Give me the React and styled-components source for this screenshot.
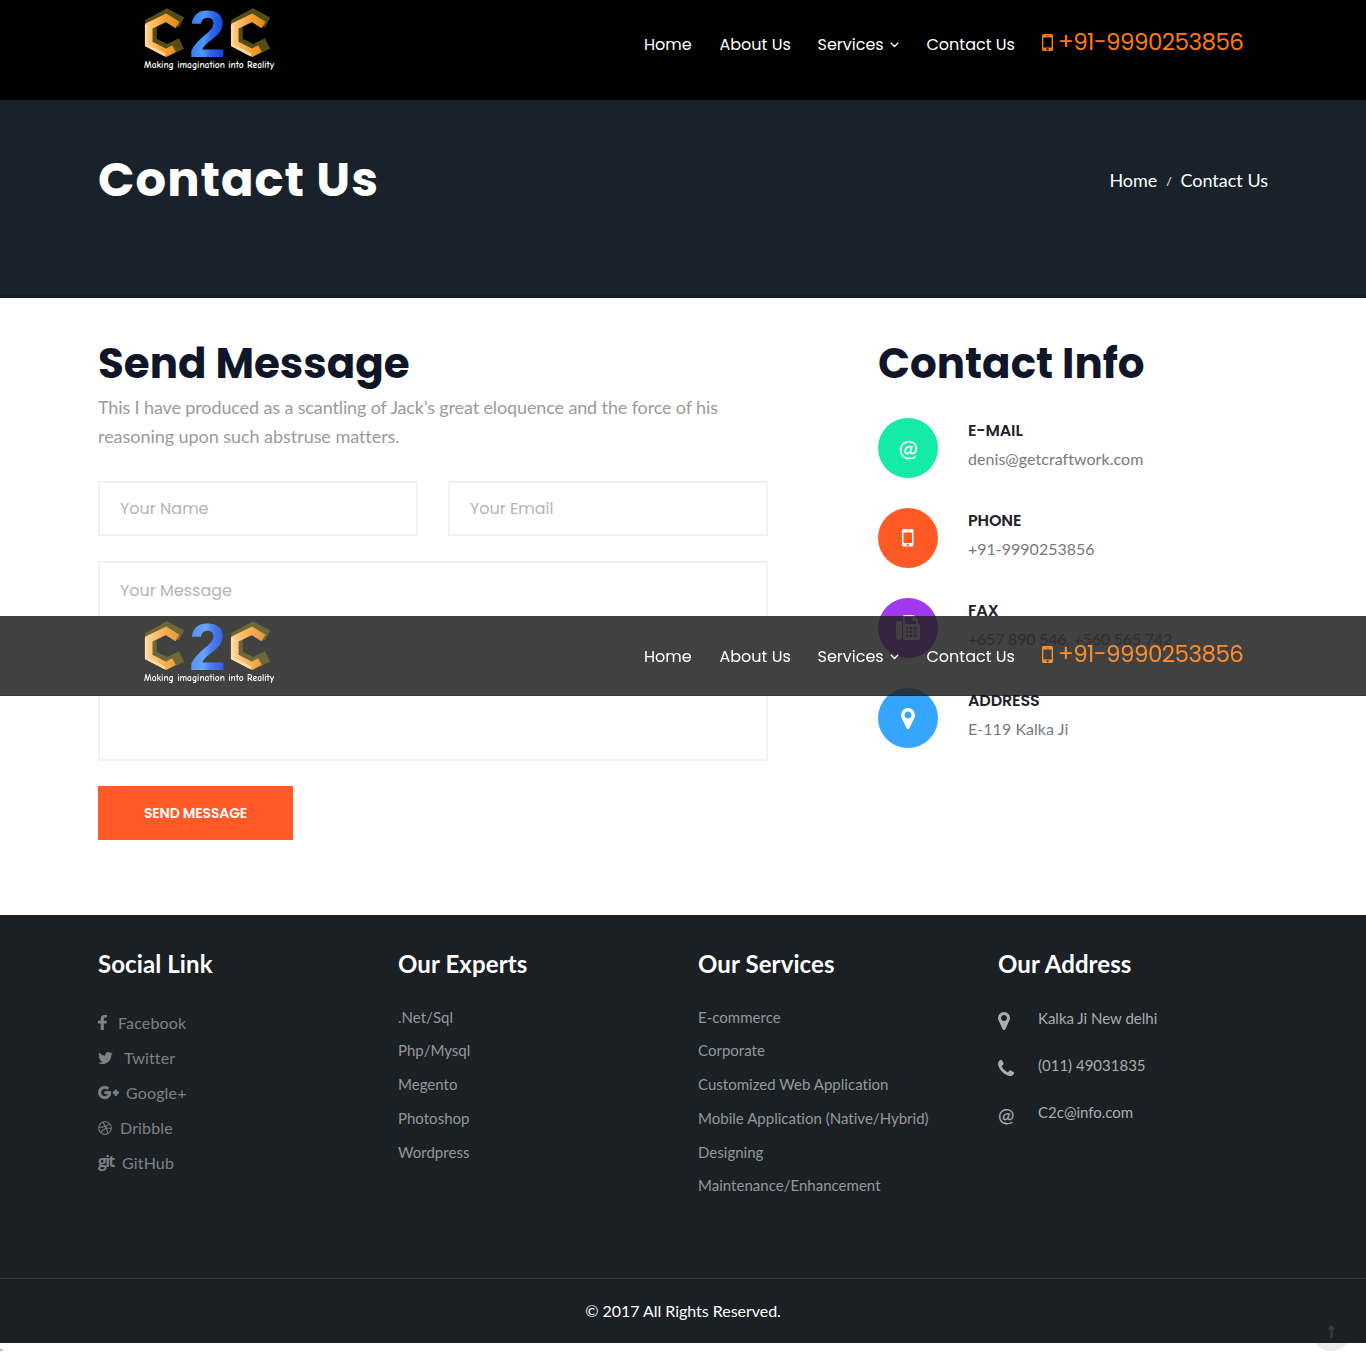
import React from 'react';
import styled, { createGlobalStyle } from 'styled-components';
import { FaGooglePlusG, FaDribbble } from 'react-icons/fa';

const display = '"Poppins", "Inter", sans-serif';
const body = '"Lato", sans-serif';

const GlobalStyle = createGlobalStyle`
  *, *::before, *::after { box-sizing: border-box; }
  body { margin: 0; background: #fff; font-family: ${body}; font-variant-ligatures: none; }
  h1, h2, h3, h4, p, ul { margin: 0; padding: 0; }
  ul { list-style: none; }
  a { color: inherit; text-decoration: none; }
`;

const Page = styled.div`
  position: relative;
  height: 1366px;
  overflow: hidden;
`;

const Container = styled.div`
  width: 1170px;
  margin: 0 auto;
`;

/* ---------- header ---------- */

const Header = styled.header`
  height: 100px;
  background: #000;
`;

const StickyHeader = styled.div`
  position: absolute;
  top: 616px;
  left: 0;
  right: 0;
  height: 80px;
  opacity: 0.85;
  background: #212121;
  border-bottom: 1px solid #161616;
`;

const Bar = styled(Container)`
  display: flex;
  align-items: flex-start;
`;

const LogoLink = styled.a`
  display: block;
  width: 546px;
  padding: ${(p) => p.$top}px 0 0 46px;
  line-height: 0;

  svg { overflow: visible; }
`;

const Nav = styled.nav`
  display: flex;
  padding-top: ${(p) => p.$top}px;
`;

const NavLink = styled.a`
  display: flex;
  align-items: center;
  gap: 6px;
  margin-right: 27.5px;
  width: ${(p) => p.$w}px;
  font: 400 16px/30px ${display};
  color: #fff;
  white-space: nowrap;
`;

const PhoneLink = styled.a`
  display: flex;
  align-items: center;
  height: 25px;
  font: 400 23px/25px ${display};
  letter-spacing: -0.54px;
  color: #ff7a0a;
  white-space: nowrap;

  svg { margin-right: 5px; }
`;

/* ---------- title banner ---------- */

const Banner = styled.section`
  height: 198px;
  background: #19222a;
  border-bottom: 3px solid #151b27;
`;

const BannerRow = styled(Container)`
  display: flex;
  justify-content: space-between;
  align-items: center;
  padding-top: 50px;
`;

const PageTitle = styled.h1`
  font: 700 48px/60px ${display};
  letter-spacing: 1px;
  color: #fff;
`;

const Crumbs = styled.div`
  display: flex;
  align-items: center;
  font-size: 18px;
  line-height: 24px;
  color: #fff;

  i { font-size: 12px; font-style: normal; width: 23px; text-align: center; padding-top: 3px; }
`;

/* ---------- contact section ---------- */

const Contact = styled.section`
  height: 617px;
  padding-top: 39px;
`;

const ContactRow = styled(Container)`
  display: flex;
  gap: 110px;
`;

const FormColumn = styled.div`
  width: 670px;
`;

const InfoColumn = styled.div`
  width: 390px;
`;

const SectionTitle = styled.h2`
  font: 700 42px/54px ${display};
  color: #10162a;
`;

const Lead = styled.p`
  margin-top: 2px;
  font-size: 18px;
  line-height: 29px;
  letter-spacing: -0.126px;
  color: #9b9b9b;

  span { letter-spacing: -0.05px; }
`;

const FieldGrid = styled.div`
  display: grid;
  grid-template-columns: 1fr 1fr;
  gap: 25px 30px;
  margin-top: 30px;
`;

const field = `
  display: block;
  width: 100%;
  padding: 0 20px;
  border: 2px solid #f2f2f2;
  border-radius: 0;
  outline: 0;
  background: #fff;
  resize: none;
`;

const Input = styled.input`
  ${field}
  height: 55px;
  font: 400 16px ${display};

  &::placeholder { color: #b5b5b5; opacity: 1; }
`;

const TextArea = styled.textarea`
  ${field}
  grid-column: 1 / -1;
  height: 200px;
  padding-top: 14px;
  font: 400 16px/28px ${display};

  &::placeholder { color: #b5b5b5; opacity: 1; }
`;

const SendButton = styled.button`
  width: 195px;
  height: 54px;
  margin-top: 25px;
  padding: 0;
  border: 0;
  background: #ff5a25;
  color: #fff;
  font: 600 14px/54px ${display};
  letter-spacing: -0.15px;
`;

const InfoList = styled.ul`
  display: grid;
  gap: 30px;
  margin-top: 27px;
`;

const InfoItem = styled.li`
  display: flex;
  gap: 30px;
  height: 60px;
`;

const Disc = styled.span`
  display: flex;
  align-items: center;
  justify-content: center;
  width: 60px;
  height: 60px;
  border-radius: 50%;
  background: ${(p) => p.$color};
  color: #fff;
`;

const InfoLabel = styled.h4`
  font: 600 16px/25px ${display};
  letter-spacing: -0.15px;
  color: #21232b;
`;

const InfoValue = styled.p`
  margin-top: 2px;
  font-size: 16px;
  line-height: 27px;
  letter-spacing: ${(p) => p.$ls}px;
  color: #777a80;
`;

const At = styled.span`
  font: 400 ${(p) => p.$size}px/24px ${body};
  -webkit-text-stroke: 0.15px currentColor;
  padding-bottom: ${(p) => p.$lift}px;
`;

/* ---------- footer ---------- */

const Footer = styled.footer`
  height: 428px;
  background: #1b2024;
`;

const FooterGrid = styled(Container)`
  display: grid;
  grid-template-columns: repeat(4, 300px);
  height: 363px;
  padding-top: 34px;
`;

const FooterTitle = styled.h3`
  font-size: 24px;
  font-weight: 700;
  line-height: 30px;
  letter-spacing: 0.1px;
  color: #fff;
`;

const LinkList = styled.ul`
  margin-top: 21.5px;

  li { font-size: 15px; line-height: 33.8px; letter-spacing: 0.02px; color: #95989a; }
`;

const SocialList = styled.ul`
  margin-top: 26px;
`;

const SocialItem = styled.li`
  display: flex;
  align-items: center;
  height: 35px;
  font-size: 16px;
  line-height: 35px;
  letter-spacing: 0.15px;
  color: #7f8284;
`;

const SocialIcon = styled.span`
  display: flex;
  align-items: center;
  width: ${(p) => p.$w}px;
`;

const GitMark = styled.span`
  font: 700 15.5px/16px "Open Sans", sans-serif;
  letter-spacing: -1.5px;
  padding-bottom: 3px;
`;

const AddressList = styled.ul`
  margin-top: 16px;
`;

const AddressItem = styled.li`
  display: flex;
  height: 47px;
  font-size: 15px;
  line-height: 47px;
  color: #aaacad;
`;

const AddressIcon = styled.span`
  display: flex;
  align-items: center;
  width: 40px;
  padding-top: 4px;
`;

const Copyright = styled.div`
  height: 65px;
  border-top: 1px solid #303539;
  font-size: 16px;
  line-height: 64px;
  letter-spacing: -0.03px;
  text-align: center;
  color: #fff;
`;

const ToTop = styled.a`
  position: absolute;
  left: 1311px;
  top: 1311px;
  display: flex;
  align-items: center;
  justify-content: center;
  width: 40px;
  height: 40px;
  border-radius: 50%;
  background: rgba(27, 31, 35, 0.09);
`;

const Tail = styled.span`
  display: block;
  margin: 1px 0 0 -1px;
  font-size: 14px;
  line-height: 20px;
  color: #777;
`;

/* ---------- icons ---------- */

const glyphs = {
  mobile: 'M976 1408q0-33-23.5-56.5t-56.5-23.5-56.5 23.5-23.5 56.5 23.5 56.5 56.5 23.5 56.5-23.5 23.5-56.5zm208-160v-704q0-13-9.5-22.5t-22.5-9.5h-512q-13 0-22.5 9.5t-9.5 22.5v704q0 13 9.5 22.5t22.5 9.5h512q13 0 22.5-9.5t9.5-22.5zm-192-848q0-16-16-16h-160q-16 0-16 16t16 16h160q16 0 16-16zm288-16v1024q0 52-38 90t-90 38h-512q-52 0-90-38t-38-90v-1024q0-52 38-90t90-38h512q52 0 90 38t38 90z',
  marker: 'M1152 640q0-106-75-181t-181-75-181 75-75 181 75 181 181 75 181-75 75-181zm256 0q0 109-33 179l-364 774q-16 33-47.5 52t-67.5 19-67.5-19-46.5-52l-365-774q-33-70-33-179 0-212 150-362t362-150 362 150 150 362z',
  phone: 'M1600 1240q0 27-10 70.5t-21 68.5q-21 50-122 106-94 51-186 51-27 0-53-3.5t-57.5-12.5-47-14.5-55.5-20.5-49-18q-98-35-175-83-127-79-264-216t-216-264q-48-77-83-175-3-9-18-49t-20.5-55.5-14.5-47-12.5-57.5-3.5-53q0-92 51-186 56-101 106-122 25-11 68.5-21t70.5-10q14 0 21 3 18 6 53 76 11 19 30 54t35 63.5 31 53.5q3 4 17.5 25t21.5 35.5 7 28.5q0 20-28.5 50t-62 55-62 53-28.5 46q0 9 5 22.5t8.5 20.5 14 24 11.5 19q76 137 174 235t235 174q2 1 19 11.5t24 14 20.5 8.5 22.5 5q18 0 46-28.5t53-62 55-62 50-28.5q14 0 28.5 7t35.5 21.5 25 17.5q25 15 53.5 31t63.5 35 54 30q70 35 76 53 3 7 3 21z',
  facebook: 'M1343 12v264h-157q-86 0-116 36t-30 108v189h293l-39 296h-254v759h-306v-759h-255v-296h255v-218q0-186 104-288.5t277-102.5q147 0 228 12z',
  twitter: 'M1684 408q-67 98-162 167 1 14 1 42 0 130-38 259.5t-115.5 248.5-184.5 210.5-258 146-323 54.5q-271 0-496-145 35 4 78 4 225 0 401-138-105-2-188-64.5t-114-159.5q33 5 61 5 43 0 85-11-112-23-185.5-111.5t-73.5-205.5v-4q68 38 146 41-66-44-105-115t-39-154q0-88 44-163 121 149 294.5 238.5t371.5 99.5q-8-38-8-74 0-134 94.5-228.5t228.5-94.5q140 0 236 102 109-21 205-78-37 115-142 178 93-10 186-50z',
};

const boxes = {
  mobile: [512, 256, 768, 1280],
  marker: [384, 128, 1024, 1536],
  phone: [192, 128, 1408, 1408],
  facebook: [479, 0, 864, 1664],
  twitter: [108, 256, 1576, 1280],
};

function Glyph({ name, height, width }) {
  const [x, y, w, h] = boxes[name];
  return (
    <svg
      width={width || (height * w) / h}
      height={height}
      viewBox={`${x} ${y} ${w} ${h}`}
      preserveAspectRatio="none"
      fill="currentColor"
    >
      <path d={glyphs[name]} />
    </svg>
  );
}

function FaxIcon() {
  return (
    <svg width="24" height="26" viewBox="0 0 24 26" fill="currentColor">
      <rect x="0" y="6" width="6" height="19" rx="2.4" />
      <path
        fillRule="evenodd"
        d="M8.500 0H17.500L22 4.500V8.200Q24 9.200 24 11V22.500Q24 25 21.500 25H8.500Q7 25 7 23.500V1.500Q7 0 8.500 0ZM9 2V9H20V6H16.500V2Z M10 12h2.300v2.300h-2.300zM14 12h2.300v2.300h-2.300zM18 12h2.300v2.300h-2.300zM10 15.800h2.300v2.300h-2.300zM14 15.800h2.300v2.300h-2.300zM18 15.800h2.300v2.300h-2.300zM10 19.600h2.300v2.300h-2.300zM14 19.600h2.300v2.300h-2.300zM18 19.600h2.300v2.300h-2.300z"
      />
    </svg>
  );
}

function HexMark({ x, id }) {
  return (
    <g transform={`translate(${x} 0)`} fill="none" strokeLinejoin="miter" filter={`url(#${id}soft)`}>
      <polyline points="37.500,14.500 23,6.800 7,15.500 7,34.500 23,42.500 37.500,35.500" stroke="#544d17" strokeWidth="11.500" />
      <polyline points="33.500,17 22,9.800 4.800,18 4.800,36 22,44.800 30,40.500" stroke={`url(#${id}gold)`} strokeWidth="7.500" />
      <polyline points="2.200,17 2.200,37 21,47" stroke="#ffd9a0" strokeWidth="2.600" />
    </g>
  );
}

function Logo({ id }) {
  return (
    <svg width="132" height="66" viewBox="0 0 132 66">
      <defs>
        <filter id={`${id}soft`} filterUnits="userSpaceOnUse" x="-4" y="-4" width="54" height="60">
          <feGaussianBlur stdDeviation=".6" />
        </filter>
        <linearGradient id={`${id}gold`} x1="0" y1="0" x2="1" y2="0">
          <stop offset="0" stopColor="#ffc67c" />
          <stop offset=".5" stopColor="#fba234" />
          <stop offset="1" stopColor="#e08a1e" />
        </linearGradient>
        <linearGradient id={`${id}blue`} x1="0" y1=".35" x2="1" y2=".5">
          <stop offset="0" stopColor="#2f78ee" />
          <stop offset=".42" stopColor="#4d97fb" />
          <stop offset=".62" stopColor="#2c68ea" />
          <stop offset="1" stopColor="#123fd0" />
        </linearGradient>
      </defs>
      <HexMark x={0} id={id} />
      <HexMark x={86} id={id} />
      <text
        x="45"
        y="49"
        fontFamily="Liberation Sans, sans-serif"
        fontWeight="700"
        fontSize="67"
        textLength="37"
        lengthAdjust="spacingAndGlyphs"
        fill={`url(#${id}blue)`}
      >
        2
      </text>
      <text
        x="0"
        y="60"
        fontFamily="Comic Sans MS, Comic Neue, Open Sans, sans-serif"
        fontWeight="600"
        fontSize="9.5"
        textLength="130"
        lengthAdjust="spacingAndGlyphs"
        fill="#fff"
      >
        Making imagination into Reality
      </text>
    </svg>
  );
}

function Chevron() {
  return (
    <svg width="9" height="6" viewBox="0 0 9 6" fill="none" stroke="currentColor" strokeWidth="1.300">
      <path d="M.8 .8L4.500 4.500L8.200 .8" />
    </svg>
  );
}

function Menu({ id, logoTop, navTop }) {
  return (
    <Bar>
      <LogoLink href="#" $top={logoTop}><Logo id={id} /></LogoLink>
      <Nav $top={navTop}>
        <NavLink href="#" $w={48}>Home</NavLink>
        <NavLink href="#" $w={70.5}>About Us</NavLink>
        <NavLink href="#" $w={81.5}>Services<Chevron /></NavLink>
        <NavLink href="#" $w={88}>Contact Us</NavLink>
        <PhoneLink href="#"><Glyph name="mobile" height={17} width={11} />+91-9990253856</PhoneLink>
      </Nav>
    </Bar>
  );
}

const infos = [
  { label: 'E-MAIL', ls: 0.05, value: 'denis@getcraftwork.com', color: '#14eba6', icon: <At $size={23} $lift={1}>@</At> },
  { label: 'PHONE', ls: 0, value: '+91-9990253856', color: '#ff5a25', icon: <Glyph name="mobile" height={17.5} width={11.5} /> },
  { label: 'FAX', ls: -0.22, value: '+657 890 546, +560 565 742', color: '#a239ee', icon: <FaxIcon /> },
  { label: 'ADDRESS', ls: 0.05, value: 'E-119 Kalka Ji', color: '#36a5ff', icon: <Glyph name="marker" height={21} /> },
];

const socials = [
  { name: 'Facebook', w: 20, icon: <Glyph name="facebook" height={15.5} width={9} /> },
  { name: 'Twitter', w: 26, icon: <Glyph name="twitter" height={12} /> },
  { name: 'Google+', w: 28, icon: <FaGooglePlusG size={21} stroke="currentColor" strokeWidth={22} /> },
  { name: 'Dribble', w: 22, icon: <FaDribbble size={14} /> },
  { name: 'GitHub', w: 24, icon: <GitMark>git</GitMark> },
];

const experts = ['.Net/Sql', 'Php/Mysql', 'Megento', 'Photoshop', 'Wordpress'];
const services = ['E-commerce', 'Corporate', 'Customized Web Application', 'Mobile Application (Native/Hybrid)', 'Designing', 'Maintenance/Enhancement'];
const addresses = [
  { text: 'Kalka Ji New delhi', icon: <Glyph name="marker" height={18} /> },
  { text: '(011) 49031835', icon: <Glyph name="phone" height={16} /> },
  { text: 'C2c@info.com', icon: <At $size={19.5} $lift={0}>@</At> },
];

export default function App() {
  return (
    <Page>
      <GlobalStyle />
      <Header><Menu id="top" logoTop={8} navTop={29.5} /></Header>
      <Banner>
        <BannerRow>
          <PageTitle>Contact Us</PageTitle>
          <Crumbs><a href="#">Home</a><i>/</i><span>Contact Us</span></Crumbs>
        </BannerRow>
      </Banner>
      <Contact>
        <ContactRow>
          <FormColumn>
            <SectionTitle>Send Message</SectionTitle>
            <Lead>
              This I have produced as a scantling of Jack’s great eloquence and the force of his
              <br />
              <span>reasoning upon such abstruse matters.</span>
            </Lead>
            <FieldGrid>
              <Input placeholder="Your Name" />
              <Input placeholder="Your Email" />
              <TextArea placeholder="Your Message" />
            </FieldGrid>
            <SendButton>SEND MESSAGE</SendButton>
          </FormColumn>
          <InfoColumn>
            <SectionTitle>Contact Info</SectionTitle>
            <InfoList>
              {infos.map((item) => (
                <InfoItem key={item.label}>
                  <Disc $color={item.color}>{item.icon}</Disc>
                  <div>
                    <InfoLabel>{item.label}</InfoLabel>
                    <InfoValue $ls={item.ls}>{item.value}</InfoValue>
                  </div>
                </InfoItem>
              ))}
            </InfoList>
          </InfoColumn>
        </ContactRow>
      </Contact>
      <Footer>
        <FooterGrid>
          <div>
            <FooterTitle>Social Link</FooterTitle>
            <SocialList>
              {socials.map((s) => (
                <SocialItem key={s.name}><SocialIcon $w={s.w}>{s.icon}</SocialIcon>{s.name}</SocialItem>
              ))}
            </SocialList>
          </div>
          <div>
            <FooterTitle>Our Experts</FooterTitle>
            <LinkList>{experts.map((t) => <li key={t}>{t}</li>)}</LinkList>
          </div>
          <div>
            <FooterTitle>Our Services</FooterTitle>
            <LinkList>{services.map((t) => <li key={t}>{t}</li>)}</LinkList>
          </div>
          <div>
            <FooterTitle>Our Address</FooterTitle>
            <AddressList>
              {addresses.map((a) => (
                <AddressItem key={a.text}><AddressIcon>{a.icon}</AddressIcon>{a.text}</AddressItem>
              ))}
            </AddressList>
          </div>
        </FooterGrid>
        <Copyright>© 2017 All Rights Reserved.</Copyright>
      </Footer>
      <Tail>`</Tail>
      <StickyHeader><Menu id="sticky" logoTop={5} navTop={25.5} /></StickyHeader>
      <ToTop href="#">
        <svg width="7" height="13" viewBox="0 0 7 13" fill="#3a3f43"><path d="M3.500 0L7 4.500H4.600V13H2.400V4.500H0Z" /></svg>
      </ToTop>
    </Page>
  );
}
